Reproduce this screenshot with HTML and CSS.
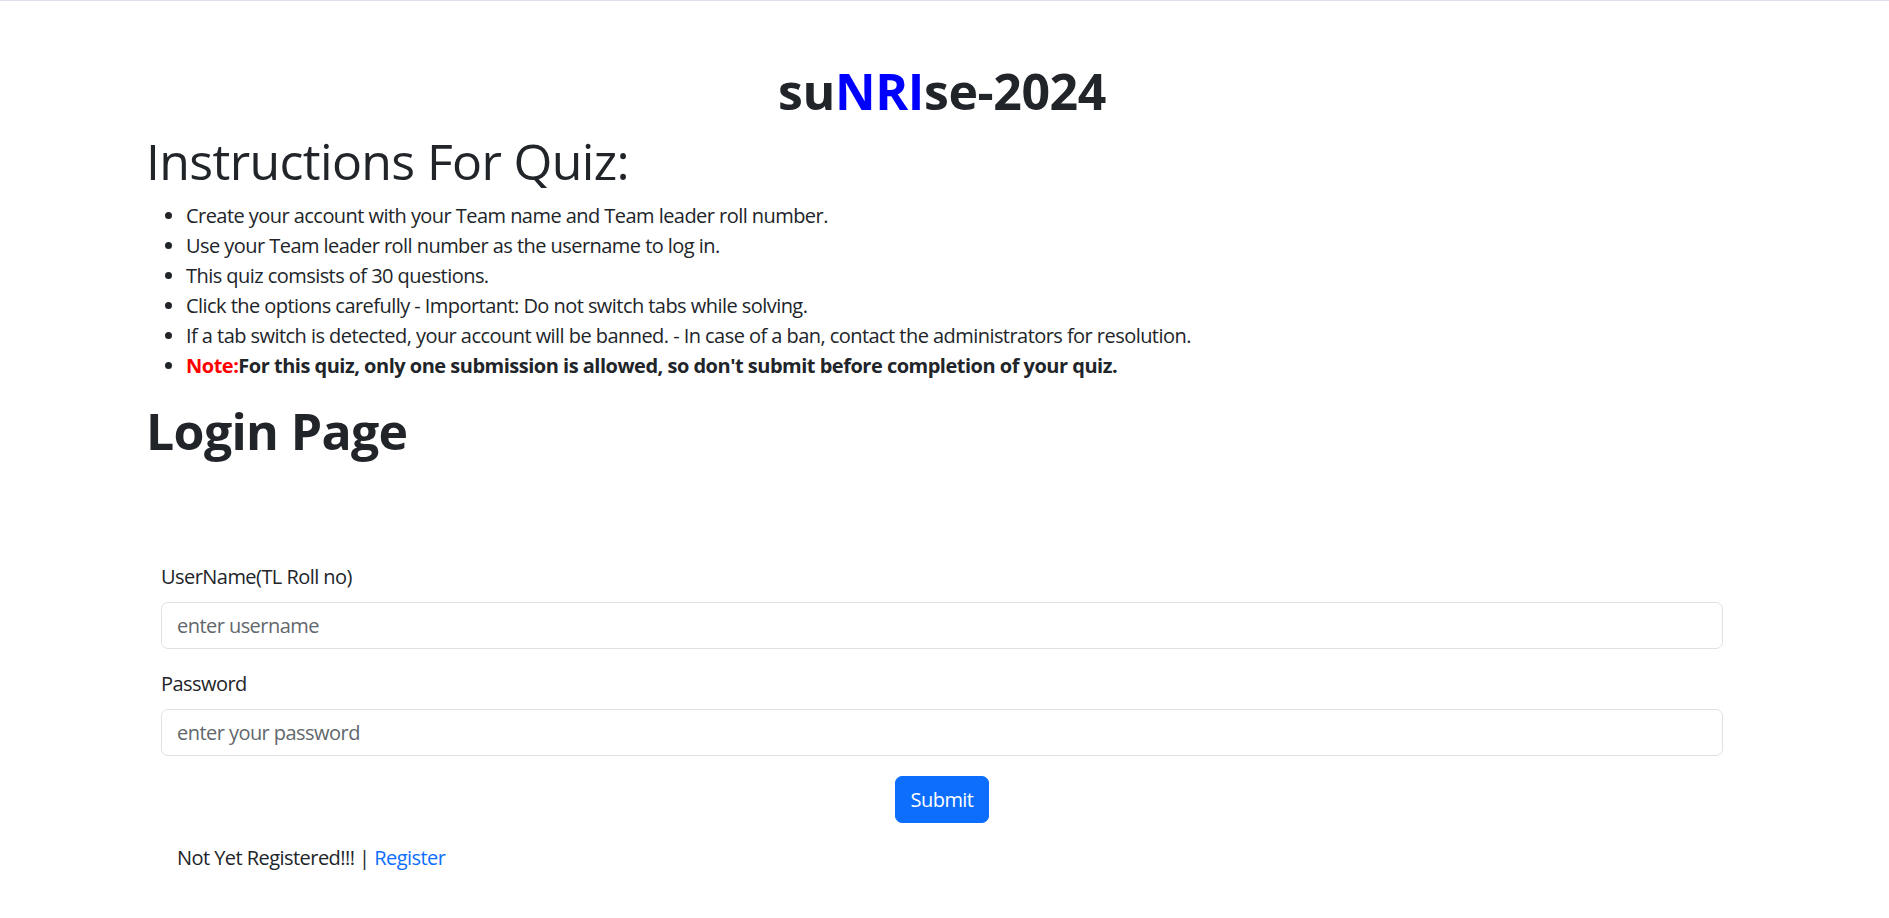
FILE: index.html
```html
<!DOCTYPE html>
<html lang="en">
<head>
<meta charset="utf-8">
<title>suNRIse-2024 Login</title>
<link rel="stylesheet" href="styles.css">
</head>
<body>
<div class="page">
  <h1 class="title">su<span class="nri">NRI</span>se-2024</h1>
  <h1 class="heading">Instructions For Quiz:</h1>
  <ul class="rules">
    <li>Create your account with your Team name and Team leader roll number.</li>
    <li>Use your Team leader roll number as the username to log in.</li>
    <li>This quiz comsists of 30 questions.</li>
    <li>Click the options carefully - Important: Do not switch tabs while solving.</li>
    <li>If a tab switch is detected, your account will be banned. - In case of a ban, contact the administrators for resolution.</li>
    <li class="note"><span class="note-label">Note:</span>For this quiz, only one submission is allowed, so don't submit before completion of your quiz.</li>
  </ul>
  <h1 class="heading bold">Login Page</h1>
  <form class="login">
    <div class="field">
      <label class="label" for="u">UserName(TL Roll no)</label>
      <input class="control" id="u" type="text" placeholder="enter username">
    </div>
    <div class="field">
      <label class="label" for="p">Password</label>
      <input class="control" id="p" type="password" placeholder="enter your password">
    </div>
    <div class="actions">
      <button class="btn" type="button">Submit</button>
    </div>
    <p class="register">Not Yet Registered!!! | <a href="#">Register</a></p>
  </form>
</div>
</body>
</html>
```
FILE: styles.css
```css
* { box-sizing: border-box; }
html, body { margin: 0; padding: 0; }
body {
  font-family: "Open Sans", "Noto Sans", "Liberation Sans", sans-serif;
  font-size: 20px;
  line-height: 30px;
  letter-spacing: -0.55px;
  color: #212529;
  background: #fff;
  border-top: 1px solid #dde0e8;
}
.page {
  padding: 0 151px 0 146px;
}
h1 {
  margin: 0 0 10px 0;
  font-size: 50px;
  line-height: 60px;
  font-weight: 400;
  letter-spacing: -0.65px;
}
.title {
  margin-top: 60px;
  text-align: center;
  font-weight: 700;
  letter-spacing: -0.4px;
}
.nri { color: #0000ff; }
.bold { font-weight: 700; }
.rules {
  margin: 0 0 20px 0;
  padding-left: 40px;
}
.note { font-weight: 700; letter-spacing: -0.5px; }
.note-label { color: #ff0000; }
.login {
  margin: 101px 15px 0 15px;
}
.field { margin-bottom: 20px; }
.label {
  display: block;
  margin-bottom: 10px;
}
.control {
  display: block;
  width: 100%;
  height: 47px;
  padding: 7px 15px;
  font: inherit;
  letter-spacing: -0.55px;
  color: #212529;
  border: 1px solid #dee2e6;
  border-radius: 7px;
  background: #fff;
}
.control::placeholder { color: #62676c; }
.actions {
  display: flex;
  justify-content: center;
}
.btn {
  font: inherit;
  letter-spacing: -0.55px;
  color: #fff;
  background: #0d6efd;
  border: 1px solid #0d6efd;
  border-radius: 7px;
  padding: 7px 15px;
  height: 47px;
}
.register {
  margin: 20px 0 0 0;
  padding-left: 16px;
}
.register a {
  color: #0d6efd;
  text-decoration: none;
}
```
